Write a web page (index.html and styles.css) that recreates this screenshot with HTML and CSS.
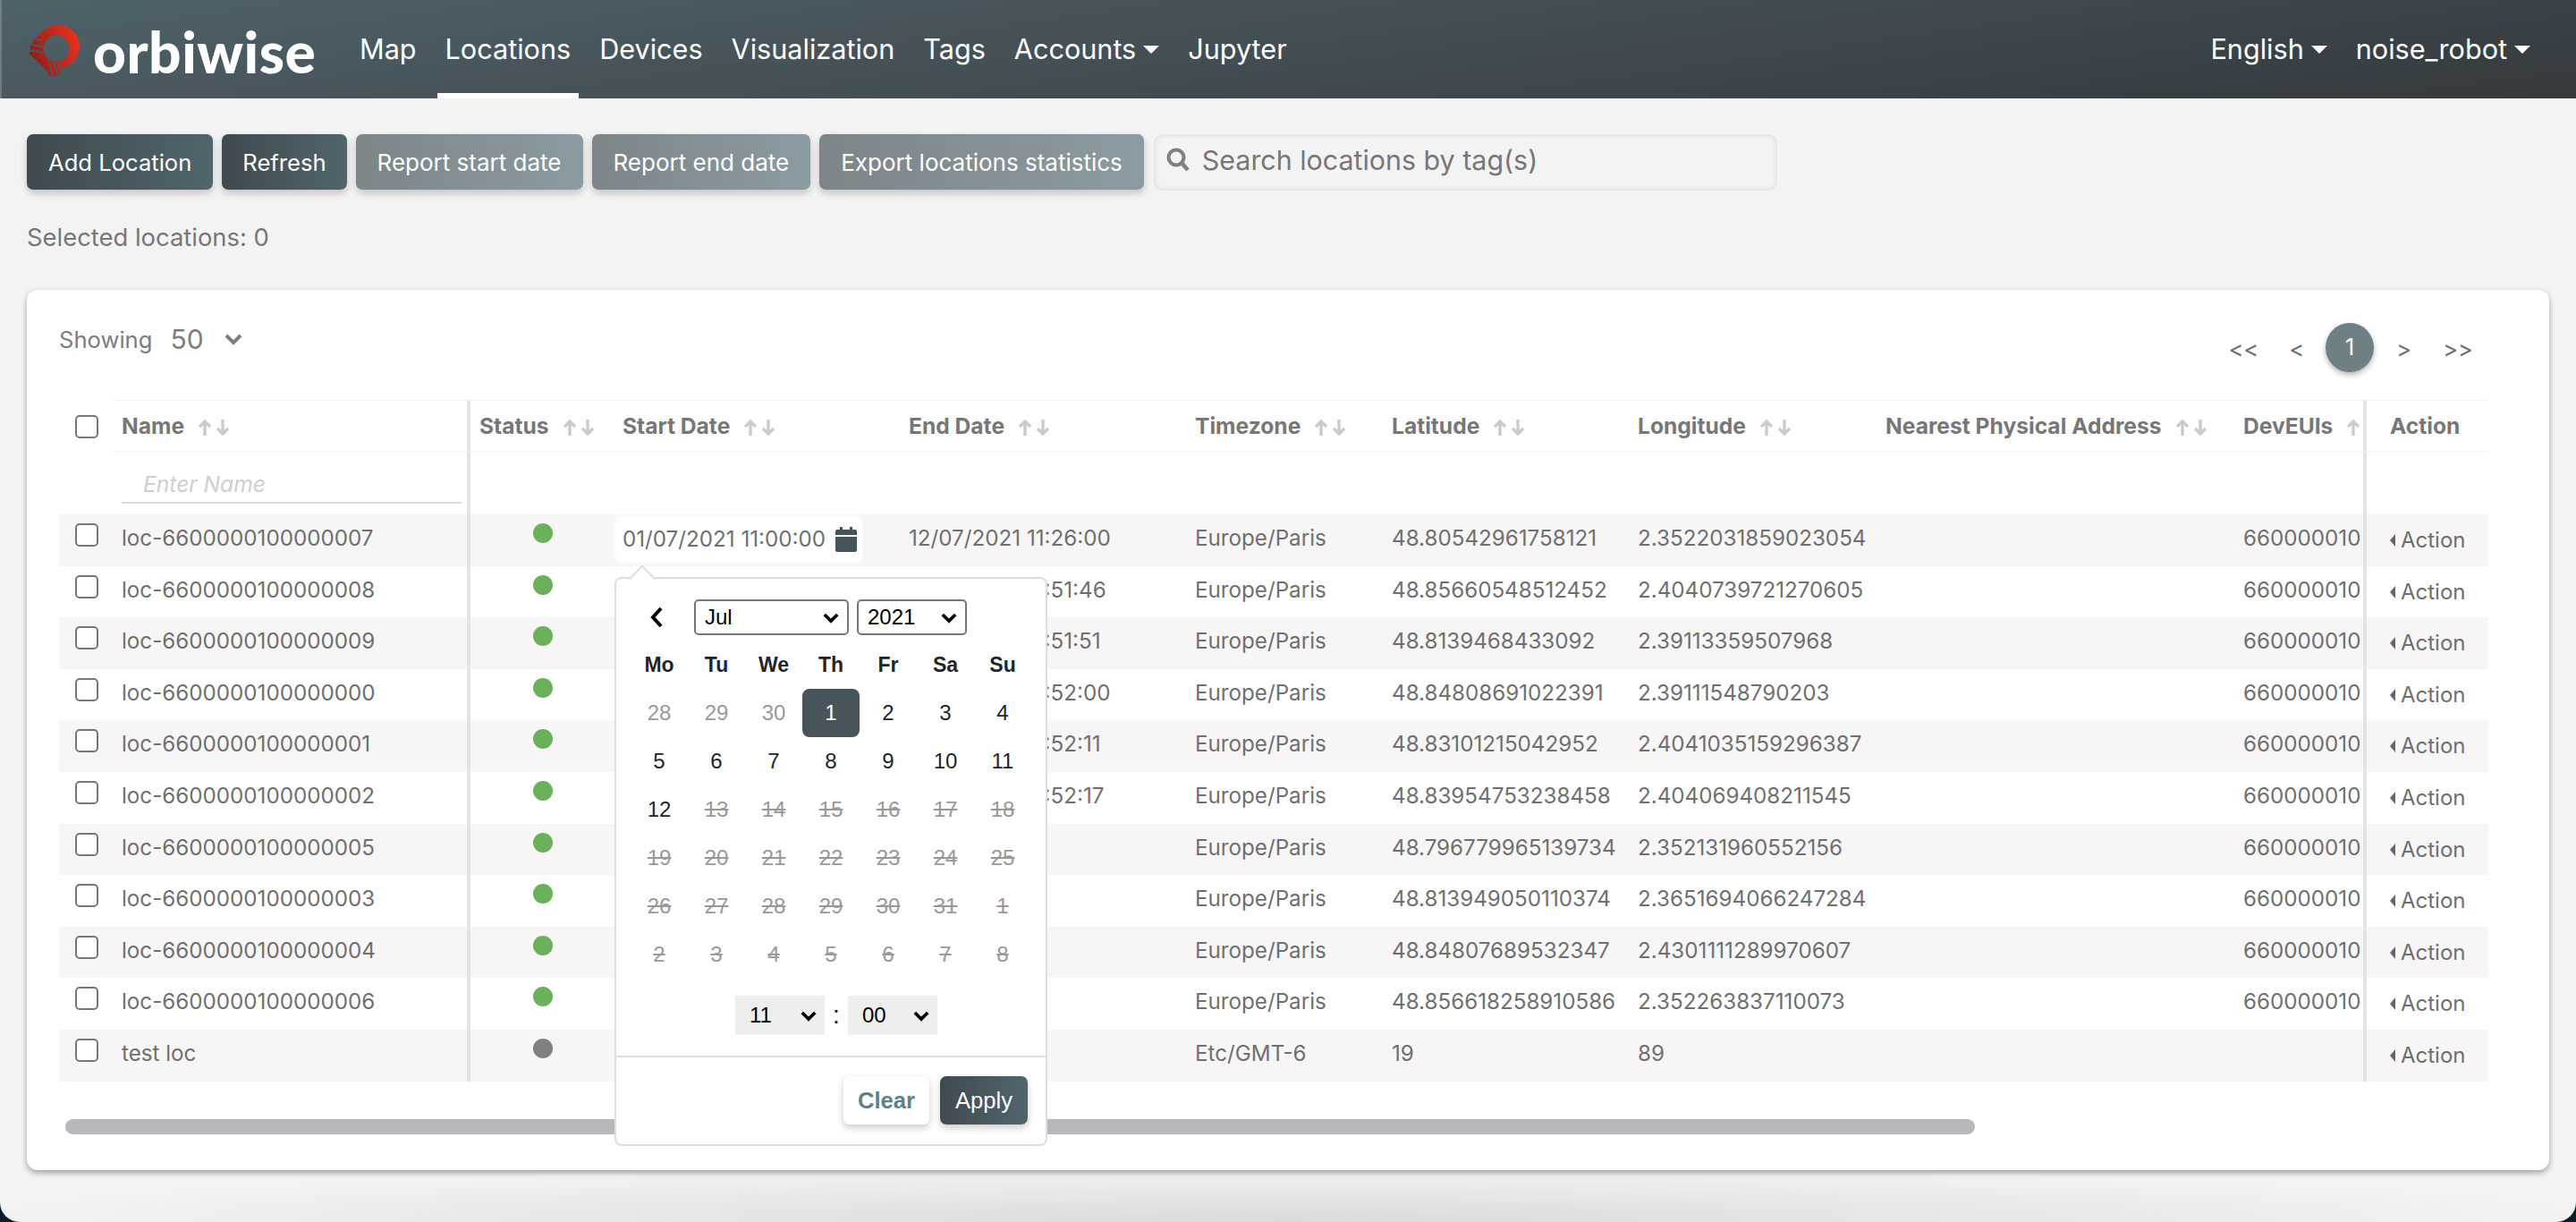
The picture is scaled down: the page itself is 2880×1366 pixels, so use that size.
FILE: index.html
```html
<!DOCTYPE html>
<html>
<head>
    <meta charset="utf-8">
    <title>Locations</title>
    <link rel="stylesheet" href="styles.css">
</head>
<body>
<svg class="defs" width="0" height="0">
    <symbol id="chev" viewBox="0 0 20 14"><path d="M2 3l8 8 8-8" fill="none" stroke="currentColor" stroke-width="4"/></symbol>
    <symbol id="sort" viewBox="0 0 36 18">
        <path d="M8 18V2M2 8l6-6 6 6" fill="none" stroke="#cbcbcb" stroke-width="3.4"/>
        <path d="M28 0v16M22 10l6 6 6-6" fill="none" stroke="#cbcbcb" stroke-width="3.4"/>
    </symbol>
</svg>
<div class="page">
    <nav class="navbar">
        <div class="brand">
            <svg class="brand-mark" viewBox="0 0 60 60">
                <defs>
                    <linearGradient id="ring" x1="0" y1="0.7" x2="1" y2="0.3">
                        <stop offset="0" stop-color="#8a1f1c"/>
                        <stop offset="1" stop-color="#e8321f"/>
                    </linearGradient>
                </defs>
                <path fill="url(#ring)" fill-rule="evenodd" d="M13 10A25 25 0 1 1 41 48.7L31 59L24 59Q14 46 0 34L0 30Q1 19 13 10ZM31 12.5A15 15 0 1 0 31 42.5A15 15 0 1 0 31 12.5Z"/>
                <path d="M-1 13.5L15 18M-1 21.5L15 25.5M-1 29L16 32M22 40L27 60M28 43L33 60M34 42L38 54" stroke="#4a5a60" stroke-width="1.8" fill="none"/>
            </svg>
            <span class="brand-name">orbiwise</span>
        </div>
        <a class="nav-link">Map</a>
        <a class="nav-link active">Locations</a>
        <a class="nav-link">Devices</a>
        <a class="nav-link">Visualization</a>
        <a class="nav-link">Tags</a>
        <a class="nav-link caret">Accounts</a>
        <a class="nav-link">Jupyter</a>
        <div class="nav-right">
            <a class="nav-link caret">English</a>
            <a class="nav-link caret">noise_robot</a>
        </div>
    </nav>

    <main class="content">
        <div class="toolbar">
            <button class="btn">Add Location</button>
            <button class="btn btn-refresh">Refresh</button>
            <button class="btn btn-light">Report start date</button>
            <button class="btn btn-light">Report end date</button>
            <button class="btn btn-light">Export locations statistics</button>
            <div class="search">
                <svg class="search-icon" viewBox="0 0 26 28"><circle cx="11" cy="11" r="8.5" fill="none" stroke="#808080" stroke-width="4"/><path d="M17 17l7 8" stroke="#808080" stroke-width="4.5"/></svg>
                <span>Search locations by tag(s)</span>
            </div>
        </div>
        <div class="selected">Selected locations: 0</div>

        <section class="card">
            <div class="card-top">
                <div class="showing">
                    <span>Showing</span>
                    <span class="showing-num">50</span>
                    <svg class="showing-chev"><use href="#chev"/></svg>
                </div>
                <div class="pager">
                    <span class="pg-first">&lt;&lt;</span>
                    <span class="pg-prev">&lt;</span>
                    <span class="pg-current">1</span>
                    <span class="pg-next">&gt;</span>
                    <span class="pg-last">&gt;&gt;</span>
                </div>
            </div>

            <div class="table-wrap">
                <table class="loc-table">
                    <colgroup>
                        <col class="c-check"><col class="c-name"><col class="c-status"><col class="c-date"><col class="c-date">
                        <col class="c-tz"><col class="c-lat"><col class="c-lon"><col class="c-addr"><col class="c-dev"><col class="c-action">
                    </colgroup>
                    <thead>
                        <tr class="head-row">
                            <th class="check"><span class="box"></span></th>
                            <th class="name">Name<svg class="sort"><use href="#sort"/></svg></th>
                            <th>Status<svg class="sort"><use href="#sort"/></svg></th>
                            <th>Start Date<svg class="sort"><use href="#sort"/></svg></th>
                            <th>End Date<svg class="sort"><use href="#sort"/></svg></th>
                            <th>Timezone<svg class="sort"><use href="#sort"/></svg></th>
                            <th>Latitude<svg class="sort"><use href="#sort"/></svg></th>
                            <th>Longitude<svg class="sort"><use href="#sort"/></svg></th>
                            <th>Nearest Physical Address<svg class="sort"><use href="#sort"/></svg></th>
                            <th class="dev">DevEUIs<svg class="sort"><use href="#sort"/></svg></th>
                            <th class="action">Action</th>
                        </tr>
                        <tr class="filter-row">
                            <td class="check"></td>
                            <td class="name"><div class="filter">Enter Name</div></td>
                            <td></td><td></td><td></td><td></td><td></td><td></td><td></td><td></td>
                            <td class="action"></td>
                        </tr>
                    </thead>
                    <tbody>
                        <tr>
                            <td class="check"><span class="box"></span></td>
                            <td class="name">loc-6600000100000007</td>
                            <td class="status"><span class="dot"></span></td>
                            <td class="start">
                                <div class="date-input">
                                    <span>01/07/2021 11:00:00</span>
                                    <svg class="cal" viewBox="0 0 24 28"><path fill="#47555b" d="M5 0h3v3h8V0h3v3h3a2 2 0 0 1 2 2v4H0V5a2 2 0 0 1 2-2h3zM0 11h24v15a2 2 0 0 1-2 2H2a2 2 0 0 1-2-2z"/></svg>
                                </div>
                            </td>
                            <td>12/07/2021 11:26:00</td><td>Europe/Paris</td><td>48.80542961758121</td><td>2.3522031859023054</td><td></td>
                            <td class="dev">660000010</td>
                            <td class="action"><span class="act">Action</span></td>
                        </tr>
                        <tr>
                            <td class="check"><span class="box"></span></td>
                            <td class="name">loc-6600000100000008</td>
                            <td class="status"><span class="dot"></span></td><td></td>
                            <td>12/07/2021 11:51:46</td><td>Europe/Paris</td><td>48.85660548512452</td><td>2.4040739721270605</td><td></td>
                            <td class="dev">660000010</td>
                            <td class="action"><span class="act">Action</span></td>
                        </tr>
                        <tr>
                            <td class="check"><span class="box"></span></td>
                            <td class="name">loc-6600000100000009</td>
                            <td class="status"><span class="dot"></span></td><td></td>
                            <td>12/07/2021 11:51:51</td><td>Europe/Paris</td><td>48.8139468433092</td><td>2.39113359507968</td><td></td>
                            <td class="dev">660000010</td>
                            <td class="action"><span class="act">Action</span></td>
                        </tr>
                        <tr>
                            <td class="check"><span class="box"></span></td>
                            <td class="name">loc-6600000100000000</td>
                            <td class="status"><span class="dot"></span></td><td></td>
                            <td>12/07/2021 11:52:00</td><td>Europe/Paris</td><td>48.84808691022391</td><td>2.39111548790203</td><td></td>
                            <td class="dev">660000010</td>
                            <td class="action"><span class="act">Action</span></td>
                        </tr>
                        <tr>
                            <td class="check"><span class="box"></span></td>
                            <td class="name">loc-6600000100000001</td>
                            <td class="status"><span class="dot"></span></td><td></td>
                            <td>12/07/2021 11:52:11</td><td>Europe/Paris</td><td>48.83101215042952</td><td>2.4041035159296387</td><td></td>
                            <td class="dev">660000010</td>
                            <td class="action"><span class="act">Action</span></td>
                        </tr>
                        <tr>
                            <td class="check"><span class="box"></span></td>
                            <td class="name">loc-6600000100000002</td>
                            <td class="status"><span class="dot"></span></td><td></td>
                            <td>12/07/2021 11:52:17</td><td>Europe/Paris</td><td>48.83954753238458</td><td>2.404069408211545</td><td></td>
                            <td class="dev">660000010</td>
                            <td class="action"><span class="act">Action</span></td>
                        </tr>
                        <tr>
                            <td class="check"><span class="box"></span></td>
                            <td class="name">loc-6600000100000005</td>
                            <td class="status"><span class="dot"></span></td><td></td>
                            <td></td><td>Europe/Paris</td><td>48.796779965139734</td><td>2.352131960552156</td><td></td>
                            <td class="dev">660000010</td>
                            <td class="action"><span class="act">Action</span></td>
                        </tr>
                        <tr>
                            <td class="check"><span class="box"></span></td>
                            <td class="name">loc-6600000100000003</td>
                            <td class="status"><span class="dot"></span></td><td></td>
                            <td></td><td>Europe/Paris</td><td>48.813949050110374</td><td>2.3651694066247284</td><td></td>
                            <td class="dev">660000010</td>
                            <td class="action"><span class="act">Action</span></td>
                        </tr>
                        <tr>
                            <td class="check"><span class="box"></span></td>
                            <td class="name">loc-6600000100000004</td>
                            <td class="status"><span class="dot"></span></td><td></td>
                            <td></td><td>Europe/Paris</td><td>48.84807689532347</td><td>2.4301111289970607</td><td></td>
                            <td class="dev">660000010</td>
                            <td class="action"><span class="act">Action</span></td>
                        </tr>
                        <tr>
                            <td class="check"><span class="box"></span></td>
                            <td class="name">loc-6600000100000006</td>
                            <td class="status"><span class="dot"></span></td><td></td>
                            <td></td><td>Europe/Paris</td><td>48.856618258910586</td><td>2.352263837110073</td><td></td>
                            <td class="dev">660000010</td>
                            <td class="action"><span class="act">Action</span></td>
                        </tr>
                        <tr>
                            <td class="check"><span class="box"></span></td>
                            <td class="name">test loc</td>
                            <td class="status"><span class="dot off"></span></td><td></td>
                            <td></td><td>Etc/GMT-6</td><td>19</td><td>89</td><td></td>
                            <td class="dev"></td>
                            <td class="action"><span class="act">Action</span></td>
                        </tr>
                    </tbody>
                </table>
            </div>
            <div class="scrollbar"></div>

            <!-- date picker popup, open on the first row -->
            <div class="picker">
                <div class="picker-head">
                    <svg class="picker-prev" viewBox="0 0 16 24"><path d="M13 2L4 12l9 10" fill="none" stroke="#000" stroke-width="4"/></svg>
                    <div class="sel sel-month"><span>Jul</span><svg class="sel-chev"><use href="#chev"/></svg></div>
                    <div class="sel sel-year"><span>2021</span><svg class="sel-chev"><use href="#chev"/></svg></div>
                </div>
                <div class="cal-grid">
                    <b>Mo</b><b>Tu</b><b>We</b><b>Th</b><b>Fr</b><b>Sa</b><b>Su</b>
                    <span class="off">28</span><span class="off">29</span><span class="off">30</span><span class="today">1</span><span>2</span><span>3</span><span>4</span>
                    <span>5</span><span>6</span><span>7</span><span>8</span><span>9</span><span>10</span><span>11</span>
                    <span>12</span><s>13</s><s>14</s><s>15</s><s>16</s><s>17</s><s>18</s>
                    <s>19</s><s>20</s><s>21</s><s>22</s><s>23</s><s>24</s><s>25</s>
                    <s>26</s><s>27</s><s>28</s><s>29</s><s>30</s><s>31</s><s>1</s>
                    <s>2</s><s>3</s><s>4</s><s>5</s><s>6</s><s>7</s><s>8</s>
                </div>
                <div class="time-row">
                    <div class="time-sel"><span>11</span><svg class="sel-chev"><use href="#chev"/></svg></div>
                    <span class="time-colon">:</span>
                    <div class="time-sel"><span>00</span><svg class="sel-chev"><use href="#chev"/></svg></div>
                </div>
                <div class="picker-foot">
                    <button class="pick-btn clear">Clear</button>
                    <button class="pick-btn apply">Apply</button>
                </div>
            </div>
        </section>
    </main>
</div>
</body>
</html>
```

FILE: styles.css
```css
* {
    box-sizing: border-box;
}
html, body {
    margin: 0;
    padding: 0;
}
body {
    background: #0c1c28;
    font-family: Inter, "Liberation Sans", sans-serif;
    color: #6f6f6f;
}
.defs {
    position: absolute;
}
.page {
    width: 2880px;
    height: 1366px;
    overflow: hidden;
    border-radius: 0 0 22px 22px;
    background: radial-gradient(ellipse 1500px 62px at 50% 100%, #dadada, rgba(218, 218, 218, 0)) #f3f3f3;
}

/* top bar */
.navbar {
    height: 110px;
    display: flex;
    padding-left: 33px;
    background: linear-gradient(172deg, #4f6269, #353a3e);
    box-shadow: inset 2px 0 0 rgba(255, 255, 255, 0.2);
    color: #fff;
    font-size: 30.6px;
}
.brand {
    display: flex;
    width: 360px;
    padding-top: 28px;
}
.brand-mark {
    width: 58px;
    height: 58px;
    overflow: hidden;
}
.brand-name {
    margin-left: 13px;
    margin-top: -10px;
    font-family: Lato, sans-serif;
    font-weight: 900;
    font-size: 64px;
    line-height: 80px;
    letter-spacing: 0.5px;
}
.nav-link {
    height: 110px;
    padding: 38px 9px 0;
    margin-right: 14px;
    line-height: 34px;
    white-space: nowrap;
}
.nav-link.active {
    border-bottom: 6px solid #fff;
}
.caret::after {
    content: "";
    display: inline-block;
    margin-left: 8px;
    vertical-align: 6px;
    border-top: 9px solid #fff;
    border-left: 9px solid transparent;
    border-right: 9px solid transparent;
}
.nav-right {
    display: flex;
    margin-left: auto;
    padding-right: 42px;
}
.nav-right .nav-link:last-child {
    margin-right: 0;
}

/* buttons row */
.content {
    padding: 40px 30px 0;
}
.toolbar {
    display: flex;
    gap: 10px;
}
.btn {
    height: 62px;
    padding: 0 24px;
    border: none;
    border-radius: 7px;
    font-family: inherit;
    font-size: 25.6px;
    color: #fff;
    background: linear-gradient(90deg, #3f4a4e, #50656c);
    box-shadow: 0 4px 8px rgba(0, 0, 0, 0.2);
}
.btn-refresh {
    padding: 0 23px;
}
.btn-light {
    font-size: 26px;
    background: linear-gradient(90deg, #7d8588, #8a9ba1);
}
.search {
    width: 697px;
    height: 63px;
    margin-left: 1px;
    display: flex;
    align-items: center;
    gap: 14px;
    padding: 0 0 5px 14px;
    border-radius: 10px;
    background: #f3f3f3;
    font-size: 30.4px;
    color: #777;
    box-shadow: inset 0 0 6px rgba(0, 0, 0, 0.12);
}
.search-icon {
    width: 26px;
    height: 28px;
}
.selected {
    margin-top: 36px;
    line-height: 32px;
    font-size: 27.4px;
    color: #777;
}

/* card with the table */
.card {
    position: relative;
    width: 2820px;
    height: 984px;
    margin-top: 43px;
    padding: 0 36px;
    background: #fff;
    border-radius: 12px;
    box-shadow: 0 3px 6px rgba(0, 0, 0, 0.35);
}
.card-top {
    height: 123px;
    display: flex;
    justify-content: space-between;
}
.showing {
    display: flex;
    align-items: center;
    height: 30px;
    margin-top: 40px;
    font-size: 25.6px;
    color: #7d7d7d;
}
.showing-num {
    margin-left: 20px;
    font-size: 30px;
}
.showing-chev {
    width: 20px;
    height: 14px;
    margin-left: 23px;
    color: #7d7d7d;
}
.pager {
    display: flex;
    align-items: center;
    height: 56px;
    margin-top: 36px;
    margin-right: 49px;
    font-size: 25.6px;
    color: #6f6f6f;
}
.pg-first, .pg-prev, .pg-next, .pg-last {
    padding-top: 2px;
}
.pg-prev {
    margin-left: 34px;
}
.pg-current {
    width: 54px;
    height: 55px;
    margin: 0 25px 0 24px;
    border-radius: 50%;
    background: #6f8084;
    color: #fff;
    font-size: 25px;
    line-height: 55px;
    text-align: center;
    box-shadow: 0 3px 6px rgba(0, 0, 0, 0.3);
}
.pg-last {
    margin-left: 35px;
}
.table-wrap {
    width: 2716px;
}
.loc-table {
    width: 2716px;
    table-layout: fixed;
    border-collapse: separate;
    border-spacing: 0;
    font-size: 24.2px;
    color: #6f6f6f;
}
.c-check { width: 60px; }
.c-name { width: 400px; }
.c-status { width: 160px; }
.c-date { width: 320px; }
.c-tz { width: 220px; }
.c-lat { width: 275px; }
.c-lon { width: 277px; }
.c-addr { width: 400px; }
.c-dev { width: 144px; }
.c-action { width: 140px; }

.loc-table th, .loc-table td {
    padding: 0 0 0 10px;
    white-space: nowrap;
    vertical-align: top;
    text-align: left;
}
.head-row th {
    height: 56px;
    line-height: 56px;
    font-size: 24.6px;
    font-weight: 700;
    color: #777;
    border-top: 1px solid #f5f5f5;
    border-bottom: 1px solid #f5f5f5;
    overflow: hidden;
}
.head-row th.check {
    border-color: transparent;
}
.sort {
    width: 36px;
    height: 18px;
    margin-left: 15px;
    vertical-align: -2px;
}
.filter-row td {
    height: 70px;
}
.filter {
    height: 58px;
    margin-right: 6px;
    padding: 20px 0 0 24px;
    border-bottom: 2px solid #dedede;
    font-size: 24.6px;
    font-style: italic;
    line-height: 32px;
    color: #cfcfcf;
}
.loc-table tbody td {
    height: 57.6px;
    padding-top: 12px;
    line-height: 30px;
}
.loc-table tbody tr:nth-child(odd) td {
    background: #f7f5f6;
}
.loc-table .name {
    border-right: 4px solid #e5e4e5;
}
.loc-table .action {
    border-left: 4px solid #e5e4e5;
    padding-left: 26px;
}
.loc-table .dev {
    overflow: hidden;
}
.loc-table tbody td.check {
    padding: 10px 0 0 18px;
}
.loc-table .check .box {
    display: block;
    width: 26px;
    height: 26px;
    border: 2px solid #777;
    border-radius: 5px;
    background: #fff;
}
.head-row .check .box {
    margin: 16px 0 0 8px;
}
.loc-table tbody td.status {
    padding: 10px 0 0 70px;
}
.dot {
    display: block;
    width: 22px;
    height: 22px;
    border-radius: 50%;
    background: #6bb05a;
}
.dot.off {
    background: #808080;
}
.loc-table tbody td.start {
    padding-top: 0;
}
.date-input {
    display: flex;
    align-items: center;
    justify-content: space-between;
    width: 281px;
    height: 56px;
    margin-left: -11px;
    padding: 0 8px 0 11px;
    border-radius: 8px;
    background: #fff;
    box-shadow: inset 0 0 5px rgba(0, 0, 0, 0.08);
}
.cal {
    width: 24px;
    height: 28px;
}
.loc-table tbody td.action {
    padding-top: 14px;
}
.act {
    font-size: 24px;
}
.act::before {
    content: "";
    display: inline-block;
    margin: 0 6px 0 0;
    vertical-align: 1px;
    border-right: 6px solid #666;
    border-top: 7px solid transparent;
    border-bottom: 7px solid transparent;
}
.scrollbar {
    width: 2135px;
    height: 17px;
    margin: 42px 0 0 7px;
    border-radius: 9px;
    background: #b8b8bc;
}

/* date picker popup */
.picker {
    position: absolute;
    left: 657px;
    top: 321px;
    width: 484px;
    height: 636px;
    background: #fff;
    border: 2px solid #dedede;
    border-radius: 8px;
    font-family: "Liberation Sans", Arial, sans-serif;
    font-size: 24px;
    color: #212529;
}
.picker::before {
    content: "";
    position: absolute;
    left: 18px;
    top: -11px;
    width: 20px;
    height: 20px;
    background: #fff;
    border-top: 2px solid #dedede;
    border-left: 2px solid #dedede;
    transform: rotate(45deg);
}
.picker-head {
    display: flex;
    align-items: center;
    height: 40px;
    margin-top: 23px;
    padding-left: 37px;
}
.picker-prev {
    width: 16px;
    height: 24px;
    margin-right: 34px;
}
.sel {
    display: flex;
    align-items: center;
    justify-content: space-between;
    height: 40px;
    padding: 0 9px 0 10px;
    border: 2px solid #767676;
    border-radius: 5px;
    color: #000;
}
.sel-month {
    width: 173px;
    margin-right: 9px;
}
.sel-year {
    width: 123px;
}
.sel-chev {
    width: 18px;
    height: 13px;
    color: #000;
}
.cal-grid {
    display: grid;
    grid-template-columns: repeat(7, 64px);
    grid-auto-rows: 54px;
    margin: 6px 0 0 16px;
    text-align: center;
    line-height: 54px;
}
.cal-grid b {
    height: 54px;
    font-size: 23px;
}
.cal-grid span {
    color: #212529;
}
.cal-grid .off, .cal-grid s {
    color: #999;
}
.cal-grid .today {
    background: #47555b;
    color: #fff;
    border-radius: 8px;
    height: 54px;
}
.time-row {
    display: flex;
    justify-content: center;
    align-items: center;
    height: 44px;
    margin-top: 19px;
    padding-left: 12px;
    color: #000;
}
.time-sel {
    display: flex;
    align-items: center;
    justify-content: space-between;
    width: 100px;
    height: 44px;
    padding: 0 9px 0 16px;
    background: #eee;
}
.time-colon {
    width: 26px;
    font-size: 28px;
    text-align: center;
}
.picker-foot {
    display: flex;
    justify-content: flex-end;
    gap: 12px;
    height: 98px;
    margin-top: 23px;
    padding: 21px 20px 0 0;
    border-top: 2px solid #dedede;
}
.pick-btn {
    height: 54px;
    border: none;
    border-radius: 7px;
    font-family: inherit;
    font-size: 25.6px;
    box-shadow: 0 4px 8px rgba(0, 0, 0, 0.2);
}
.clear {
    width: 96px;
    background: #fff;
    color: #5f8288;
    font-weight: 700;
}
.apply {
    width: 98px;
    background: linear-gradient(90deg, #3f4a4e, #50656c);
    color: #fff;
}
```
